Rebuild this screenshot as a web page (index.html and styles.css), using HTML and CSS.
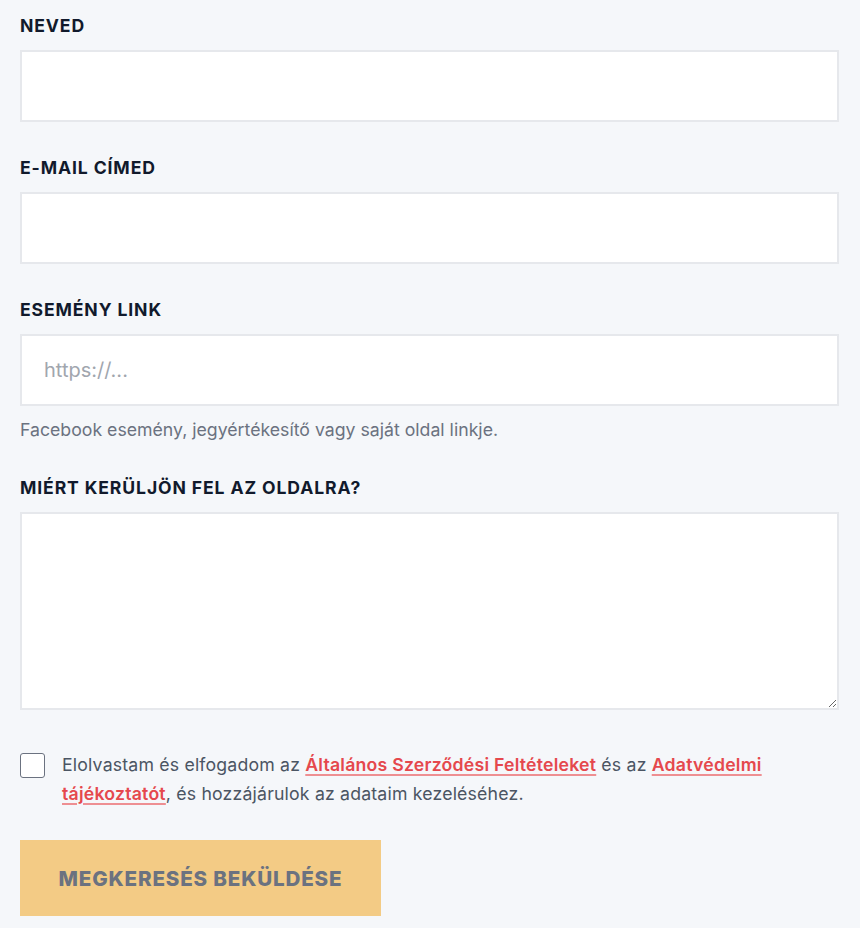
FILE: index.html
```html
<!DOCTYPE html>
<html lang="hu">
<head>
    <meta charset="UTF-8">
    <title>Esemény beküldése</title>
    <meta name="viewport" content="width=device-width, initial-scale=1.0">
    <link rel="stylesheet" href="styles.css">
</head>
<body>
<form class="submit-form">
    <div class="field">
        <label class="field-label" for="name">Neved</label>
        <input class="field-input" id="name" type="text">
    </div>
    <div class="field">
        <label class="field-label" for="email">E-mail címed</label>
        <input class="field-input" id="email" type="email">
    </div>
    <div class="field">
        <label class="field-label" for="link">Esemény link</label>
        <input class="field-input" id="link" type="url" placeholder="https://...">
        <p class="field-help">Facebook esemény, jegyértékesítő vagy saját oldal linkje.</p>
    </div>
    <div class="field">
        <label class="field-label" for="reason">Miért kerüljön fel az oldalra?</label>
        <textarea class="field-input field-textarea" id="reason"></textarea>
    </div>
    <label class="consent">
        <input class="consent-box" type="checkbox">
        <span class="consent-text">Elolvastam és elfogadom az <a href="#">Általános Szerződési Feltételeket</a> és az <a href="#">Adatvédelmi tájékoztatót</a>, és hozzájárulok az adataim kezeléséhez.</span>
    </label>
    <button class="submit-btn" type="submit">Megkeresés beküldése</button>
</form>
</body>
</html>
```

FILE: styles.css
```css
* {
    margin: 0;
    padding: 0;
    box-sizing: border-box;
}

body {
    background-color: #f5f7fa;
    font-family: Inter, "Noto Sans", sans-serif;
    color: #4b5563;
}

.submit-form {
    display: flex;
    flex-direction: column;
    padding: 14px 21px 0 20px;
}

.field {
    display: flex;
    flex-direction: column;
    margin-bottom: 34px;
}

.field-label {
    display: block;
    margin-bottom: 12px;
    font-size: 17.6px;
    line-height: 24px;
    font-weight: 700;
    letter-spacing: 0.05em;
    text-transform: uppercase;
    color: #111a2c;
}

.field-input {
    display: block;
    width: 100%;
    height: 72px;
    padding: 0 22px;
    border: 2px solid #e6e8ec;
    border-radius: 0;
    background-color: #fff;
    font-family: inherit;
    font-size: 20px;
    color: #1f2937;
    outline: none;
}

.field-input::placeholder {
    color: #a1a6ae;
}

.field-textarea {
    height: 198px;
    padding: 16px 22px;
    resize: vertical;
}

.field-help {
    margin-top: 12px;
    font-size: 17.7px;
    line-height: 24px;
    color: #6b7280;
}

.consent {
    display: flex;
    align-items: flex-start;
    gap: 17px;
    margin-top: 8px;
    margin-bottom: 32px;
    cursor: pointer;
}

.consent-box {
    flex: none;
    width: 25px;
    height: 25px;
    margin-top: 1px;
    appearance: none;
    border: 1px solid #6b7280;
    border-radius: 3px;
    background-color: #fff;
}

.consent-text {
    margin-top: -2px;
    font-size: 17.7px;
    line-height: 29px;
    letter-spacing: 0.01em;
    color: #4b5563;
}

.consent-text a {
    color: #e5484d;
    font-weight: 600;
    letter-spacing: 0.012em;
    text-decoration: underline;
    text-underline-offset: 3px;
    text-decoration-thickness: 2px;
    text-decoration-color: #ee8f92;
}

.submit-btn {
    align-self: flex-start;
    width: 361px;
    height: 76px;
    border: none;
    background-color: #f3cb85;
    font-family: inherit;
    font-size: 20.6px;
    font-weight: 800;
    letter-spacing: 0.04em;
    text-transform: uppercase;
    color: #6b7280;
    cursor: pointer;
}
```
